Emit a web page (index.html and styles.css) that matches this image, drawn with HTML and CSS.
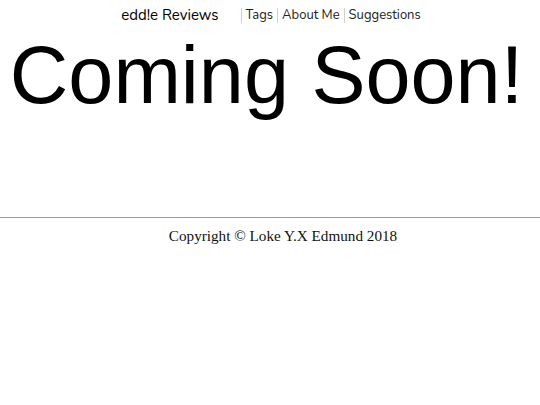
FILE: index.html
```html
<!DOCTYPE html>
<html>
<head>
<meta charset="utf-8">
<link rel="stylesheet" href="styles.css">
</head>
<body>
<header class="topbar">
  <span class="brand">edd!e Reviews</span>
  <nav class="nav">
    <a class="nav-item">Tags</a>
    <a class="nav-item">About Me</a>
    <a class="nav-item">Suggestions</a>
  </nav>
</header>
<main class="hero">
  <h1 class="title">Coming Soon!</h1>
</main>
<footer class="footer">
  <div class="rule"></div>
  <p class="copy">Copyright © Loke Y.X Edmund 2018</p>
</footer>
</body>
</html>
```
FILE: styles.css
```css
html, body {
  margin: 0;
  padding: 0;
  background: #fff;
}
.topbar {
  display: flex;
  justify-content: center;
  align-items: center;
  height: 30px;
  padding-left: 6px;
  font-family: "Nunito", "Lato", "Noto Sans", sans-serif;
  color: #000;
}
.brand {
  font-size: 15px;
  margin-right: 22px;
}
.nav {
  display: flex;
  font-size: 13px;
  color: #222;
}
.nav-item {
  padding: 0 4px;
  border-left: 1px solid #d0d0d0;
  line-height: 15px;
}
.hero {
  display: flex;
  justify-content: center;
  padding-right: 7px;
}
.title {
  margin: 0;
  font-family: "Liberation Sans", Arial, sans-serif;
  font-weight: normal;
  font-size: 81px;
  line-height: 90px;
}
.footer {
  padding-top: 97px;
}
.rule {
  height: 1px;
  background: #999;
}
.copy {
  margin: 9px 0 0;
  padding-left: 26px;
  text-align: center;
  font-family: "Liberation Serif", "Times New Roman", serif;
  font-size: 15.2px;
  color: #111;
}
```
